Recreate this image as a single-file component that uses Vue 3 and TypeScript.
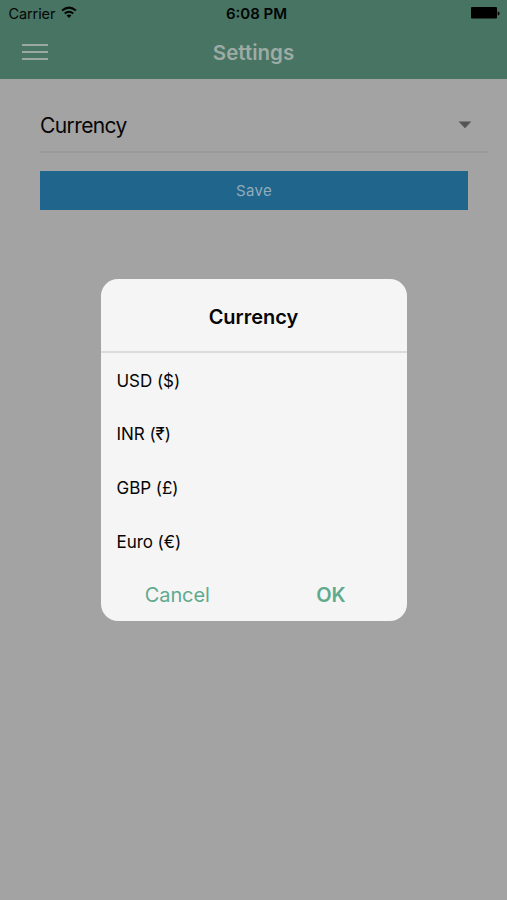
<script setup lang="ts">
import { ref } from 'vue'

const currencies: string[] = ['USD ($)', 'INR (₹)', 'GBP (£)', 'Euro (€)']
const selected = ref<string | null>(null)
</script>

<template>
  <div class="screen">
    <header class="header">
      <div class="status">
        <div class="carrier">
          <span class="carrier-name">Carrier</span>
          <svg class="wifi" width="16" height="13" viewBox="0 0 16 13">
            <g fill="none" stroke="#030605" stroke-width="2">
              <path d="M1.1 4.5Q8 -1.3 14.9 4.5" />
              <path d="M3.7 7.5Q8 3.9 12.3 7.5" />
            </g>
            <path d="M5.6 9.4Q8 7.6 10.4 9.4L8 12.1Z" fill="#030605" />
          </svg>
        </div>
        <span class="time">6:08 PM</span>
        <svg class="battery" width="30" height="14" viewBox="0 0 30 14">
          <rect x="1" y="1" width="26" height="11.6" rx="1" />
          <path d="M27.7 5.4Q29.6 5.6 29.6 7.4T27.7 9.4Z" />
        </svg>
      </div>
      <nav class="nav">
        <button class="menu" aria-label="Menu"><i /><i /><i /></button>
        <h1 class="title">Settings</h1>
        <span />
      </nav>
    </header>

    <main class="content">
      <div class="select">
        <span class="select-label">Currency</span>
        <svg width="14" height="8" viewBox="0 0 14 8"><path d="M.5.6H13.3L7 7.2Z" fill="#545454" /></svg>
      </div>
      <button class="save">Save</button>
    </main>

    <div class="overlay">
      <section class="dialog" role="dialog" aria-modal="true">
        <h2 class="dialog-title">Currency</h2>
        <ul class="options">
          <li v-for="item in currencies" :key="item" class="option" @click="selected = item">{{ item }}</li>
        </ul>
        <div class="actions">
          <button class="action cancel">Cancel</button>
          <button class="action ok">OK</button>
        </div>
      </section>
    </div>
  </div>
</template>

<style>
body {
  margin: 0;
}
</style>

<style scoped>
.screen {
  position: relative;
  width: 507px;
  height: 900px;
  overflow: hidden;
  background: #a3a3a3;
  color: #060606;
  font-family: Inter, "Noto Sans", sans-serif;
}
button {
  padding: 0;
  border: 0;
  background: none;
  font-family: inherit;
}
.header {
  height: 79px;
  background: #487463;
}
.status {
  display: grid;
  grid-template-columns: 1fr auto 1fr;
  align-items: center;
  height: 28px;
  padding: 0 7px 0 8px;
}
.carrier {
  display: flex;
  align-items: center;
  gap: 6px;
}
.carrier-name {
  margin: -1px 0 0 0.5px;
  font-size: 14.5px;
  letter-spacing: -0.1px;
}
.wifi {
  margin-top: -3px;
}
.time {
  margin: -1px 0 0 5px;
  font-size: 15px;
  font-weight: 600;
  color: #020504;
}
.battery {
  justify-self: end;
  margin-top: -2px;
}
.nav {
  display: grid;
  grid-template-columns: 1fr auto 1fr;
  align-items: center;
  height: 48px;
  padding: 0 21px;
}
.menu {
  display: flex;
  flex-direction: column;
  gap: 5px;
  width: 26px;
  margin-left: 1px;
}
.menu i {
  height: 2px;
  background: #9ba9a3;
}
.title {
  margin: 0;
  font-size: 20.5px;
  font-weight: 600;
  color: #9eaba5;
}
.content {
  display: flex;
  flex-direction: column;
  padding: 19px 19px 0 40px;
}
.select {
  display: flex;
  align-items: center;
  justify-content: space-between;
  height: 53px;
  padding-right: 16px;
  border-bottom: 2px solid #9a9a9a;
}
.select-label {
  padding-top: 1px;
  font-size: 21px;
  letter-spacing: -0.6px;
}
.save {
  height: 39px;
  margin: 18px 20px 0 0;
  padding-bottom: 1px;
  background: #20658c;
  color: #91acba;
  font-size: 15px;
  letter-spacing: 0.3px;
}
.overlay {
  position: absolute;
  inset: 0;
  display: flex;
  align-items: center;
  justify-content: center;
}
.dialog {
  width: 306px;
  height: 342px;
  overflow: hidden;
  border-radius: 17px;
  background: #f5f5f5;
}
.dialog-title {
  height: 72px;
  margin: 0;
  border-bottom: 2px solid #dcdcdc;
  font-size: 20px;
  font-weight: 600;
  line-height: 77px;
  text-align: center;
}
.options {
  margin: 0;
  padding: 0;
  list-style: none;
}
.option {
  height: 52px;
  padding: 1.7px 0 0 16px;
  font-size: 17px;
  letter-spacing: -0.05px;
  line-height: 53.7px;
}
.actions {
  display: flex;
  height: 53px;
}
.action {
  flex: 1;
  height: 53px;
  padding: 2px 0 0 1px;
  font-size: 20px;
  letter-spacing: -0.1px;
  color: #5faa8d;
}
.ok {
  padding-left: 2px;
  font-weight: 600;
}
</style>
